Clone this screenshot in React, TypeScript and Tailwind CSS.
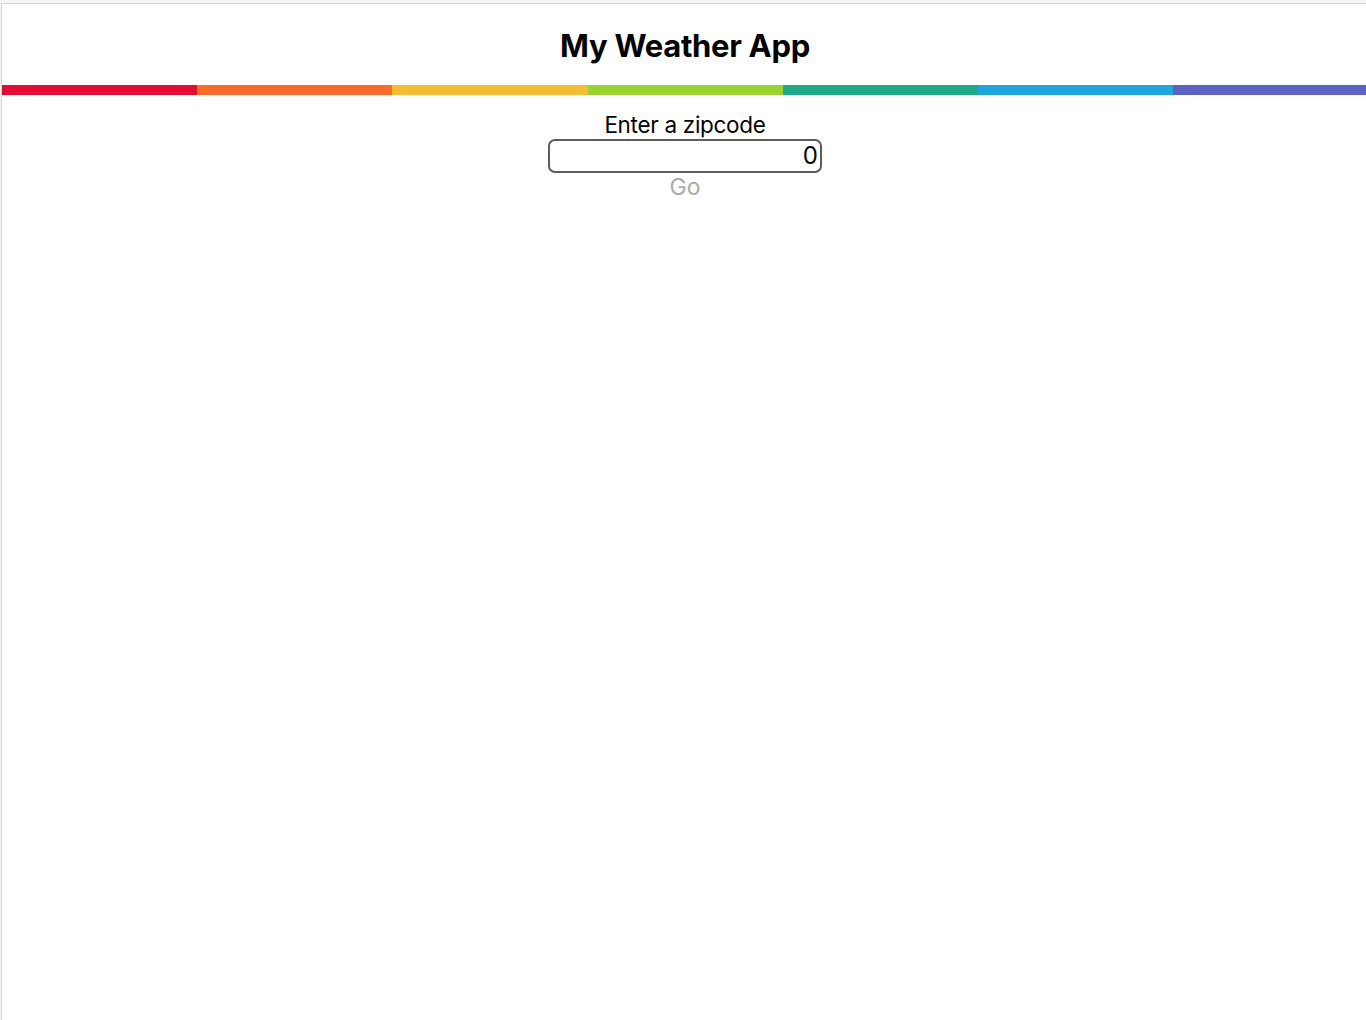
import React from "react";

const colors = [
  "bg-[#e10e34]",
  "bg-[#fe6b28]",
  "bg-[#f8bc33]",
  "bg-[#9bd32e]",
  "bg-[#1fa984]",
  "bg-[#1fa6df]",
];

export default function App() {
  return (
    <div className="min-h-[1020px] bg-[#f4f4f4] pt-[3px] pl-[1px] flex flex-col" style={{ fontFamily: "Inter, 'Liberation Sans', sans-serif" }}>
      <div className="flex-1 bg-white border-t border-l border-[#d6d6d6] flex flex-col">
        <header className="h-[81px] flex items-center justify-center">
          <h1 className="text-[31px] font-bold text-black tracking-[-0.3px] leading-none pt-[1px] pl-[2px]">My Weather App</h1>
        </header>
        <div className="flex h-[10px]">
          {colors.map((c) => (
            <div key={c} className={`w-[195.2px] shrink-0 ${c}`} />
          ))}
          <div className="flex-1 bg-[#5a63c4]" />
        </div>
        <main className="flex flex-col items-center pt-[16px] pl-[2px]">
          <label className="text-[22.5px] leading-[27px] text-black tracking-[-0.3px]">Enter a zipcode</label>
          <input
            type="number"
            defaultValue={0}
            className="mt-[1px] w-[274px] h-[34px] border-2 border-[#5c5c5c] rounded-[7px] text-right text-[24px] pr-[2px] pl-[4px] text-black outline-none [appearance:textfield] [&::-webkit-inner-spin-button]:appearance-none [&::-webkit-outer-spin-button]:appearance-none"
          />
          <button className="mt-[1px] text-[23px] leading-[26px] text-[#ababab]">Go</button>
        </main>
      </div>
    </div>
  );
}
